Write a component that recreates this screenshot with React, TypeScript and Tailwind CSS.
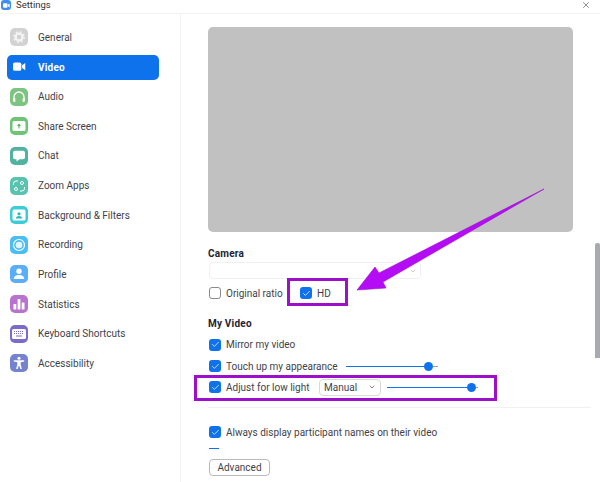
import React from 'react';
import { ChevronDown, Check, X } from 'lucide-react';

const VideoGlyph = ({ className }: { className: string }) => (
  <svg viewBox="0 0 14 10" className={className} fill="currentColor">
    <rect x="0" y="0.5" width="9" height="9" rx="2" />
    <path d="M9.8 3.6 13.2 1v8L9.8 6.4z" />
  </svg>
);

const icons: Record<string, React.ReactNode> = {
  General: (
    <svg viewBox="0 0 18 18" className="size-full" fill="none">
      <circle cx="9" cy="9" r="3.4" stroke="#fff" strokeWidth="2.4" fill="none" opacity="0.75" />
      <circle cx="9" cy="9" r="5.2" stroke="#fff" strokeWidth="1.4" strokeDasharray="2 2.08" opacity="0.75" />
    </svg>
  ),
  Audio: (
    <svg viewBox="0 0 18 18" className="size-full" fill="none">
      <path d="M4 12V9a5 5 0 0 1 10 0v3" stroke="#fff" strokeWidth="1.3" />
      <rect x="3.2" y="10" width="2.2" height="4" rx="1" fill="#fff" />
      <rect x="12.6" y="10" width="2.2" height="4" rx="1" fill="#fff" />
    </svg>
  ),
  'Share Screen': (
    <svg viewBox="0 0 18 18" className="size-full" fill="none">
      <rect x="2.5" y="4" width="13" height="10" rx="1.5" fill="#fff" />
      <path d="M9 11.5V7.5M7.5 8.8 9 7.2l1.5 1.6" stroke="#4fb85a" strokeWidth="1.1" />
    </svg>
  ),
  Chat: (
    <svg viewBox="0 0 18 18" className="size-full" fill="#fff">
      <path d="M5 3.8h8a2 2 0 0 1 2 2v4.4a2 2 0 0 1-2 2H9.5L6.5 14.6v-2.4H5a2 2 0 0 1-2-2V5.8a2 2 0 0 1 2-2z" />
    </svg>
  ),
  'Zoom Apps': (
    <svg viewBox="0 0 18 18" className="size-full" fill="none" stroke="#fff" strokeWidth="1">
      <path d="M8 4H6a2.5 2.5 0 0 0-2.5 2.5V8M14.5 10v1.5A2.5 2.5 0 0 1 12 14h-2" />
      <circle cx="12" cy="6" r="1.5" />
      <circle cx="6" cy="12" r="1.5" />
    </svg>
  ),
  'Background & Filters': (
    <svg viewBox="0 0 18 18" className="size-full" fill="none">
      <rect x="2.5" y="3.5" width="13" height="11" rx="1.5" fill="#fff" />
      <circle cx="9" cy="7.8" r="1.6" fill="#2bb8c6" />
      <path d="M5.8 12.5c.3-1.8 1.6-2.5 3.2-2.5s2.9.7 3.2 2.5z" fill="#2bb8c6" />
    </svg>
  ),
  Recording: (
    <svg viewBox="0 0 18 18" className="size-full" fill="none">
      <circle cx="9" cy="9" r="5.5" stroke="#fff" strokeWidth="1.2" />
      <circle cx="9" cy="9" r="3.3" fill="#fff" fillOpacity="0.85" />
    </svg>
  ),
  Profile: (
    <svg viewBox="0 0 18 18" className="size-full" fill="#fff">
      <circle cx="9" cy="6.3" r="2.7" />
      <path d="M3.8 14c0-2.8 2.3-4 5.2-4s5.2 1.2 5.2 4z" />
    </svg>
  ),
  Statistics: (
    <svg viewBox="0 0 18 18" className="size-full" fill="#fff">
      <rect x="3.5" y="9" width="2.8" height="5.5" rx="0.5" />
      <rect x="7.6" y="4" width="2.8" height="10.5" rx="0.5" />
      <rect x="11.7" y="7.5" width="2.8" height="7" rx="0.5" />
    </svg>
  ),
  'Keyboard Shortcuts': (
    <svg viewBox="0 0 18 18" className="size-full" fill="none">
      <rect x="2" y="4" width="14" height="10" rx="1.5" fill="#fff" />
      <path d="M4 6.5h10M4 8.5h10" stroke="#7d6bc9" strokeWidth="1" strokeDasharray="1 1" />
      <path d="M6 11h6" stroke="#7d6bc9" strokeWidth="1" />
    </svg>
  ),
  Accessibility: (
    <svg viewBox="0 0 18 18" className="size-full" fill="#fff">
      <circle cx="9" cy="4.3" r="1.5" />
      <path d="M3.8 6.2h10.4v1.4l-3.5.6v2.4l1.2 4.3h-1.5L9 11.3 7.6 14.9H6.1l1.2-4.3V8.2l-3.5-.6z" />
    </svg>
  ),
};

const navItems = [
  { label: 'General', color: 'bg-[#d2d2d2]' },
  { label: 'Video', color: '' },
  { label: 'Audio', color: 'bg-[#7cc47f]' },
  { label: 'Share Screen', color: 'bg-[#6cc474]' },
  { label: 'Chat', color: 'bg-[#4fb3a0]' },
  { label: 'Zoom Apps', color: 'bg-[#58c3ae]' },
  { label: 'Background & Filters', color: 'bg-[#3ccbd8]' },
  { label: 'Recording', color: 'bg-[#4bbdf5]' },
  { label: 'Profile', color: 'bg-[#5aadf8]' },
  { label: 'Statistics', color: 'bg-[#b873cf]' },
  { label: 'Keyboard Shortcuts', color: 'bg-[#7d6bc9]' },
  { label: 'Accessibility', color: 'bg-[#7582cf]' },
];

const CheckBox = ({ checked = true }: { checked?: boolean }) =>
  checked ? (
    <span className="flex size-3 shrink-0 items-center justify-center rounded-[3px] bg-[#0e72ed]">
      <Check size={9} color="#fff" strokeWidth={2} />
    </span>
  ) : (
    <span className="size-3 shrink-0 rounded-[3px] border border-[#8a8a8a] bg-white" />
  );

const Slider = ({ width, knob }: { width: string; knob: string }) => (
  <div className={`flex items-center ${width}`}>
    <div className={`h-px bg-[#0e72ed] ${knob}`} />
    <div className="size-[9px] shrink-0 rounded-full bg-[#0e72ed]" />
    <div className="h-px flex-1 bg-[#9a9a9a]" />
  </div>
);

export default function App() {
  return (
    <div className="relative flex h-[482px] w-[600px] flex-col overflow-hidden bg-white font-['Roboto',sans-serif] text-[10px] text-[#3f3f4a]">
      {/* Title bar */}
      <div className="flex h-[14px] shrink-0 items-start border-b border-[#f2f2f4] pr-[9px]">
        <span className="ml-px flex size-[10px] items-center justify-center rounded-[3px] bg-[#3d8ef0]">
          <VideoGlyph className="w-[7px] text-white" />
        </span>
        <span className="ml-[5px] text-[9.5px] leading-[10px] text-[#333]">Settings</span>
        <X size={10} className="ml-auto text-[#333]" strokeWidth={1.3} />
      </div>

      <div className="flex min-h-0 flex-1">
        {/* Sidebar */}
        <div className="flex w-[181px] shrink-0 flex-col border-r border-[#f1f2f6] pl-[7px] pt-[8.6px]">
          {navItems.map((item) =>
            item.label === 'Video' ? (
              <div key={item.label} className="flex h-[29.64px] items-center">
                <div className="flex h-[25px] w-[152px] items-center rounded-[5px] bg-[#0e72ed] pl-[6px] font-bold tracking-[0.02em] text-white">
                  <VideoGlyph className="w-[13px] text-white" />
                  <span className="ml-[12px]">Video</span>
                </div>
              </div>
            ) : (
              <div key={item.label} className="flex h-[29.64px] items-center pl-[3px]">
                <span className={`size-[18px] shrink-0 rounded-[5px] ${item.color}`}>{icons[item.label]}</span>
                <span className="ml-[10px] whitespace-nowrap">{item.label}</span>
              </div>
            ),
          )}
        </div>

        {/* Content */}
        <div className="flex min-w-0 flex-1 flex-col pl-[27px] pt-[13px]">
          <div className="h-[205px] w-[365px] shrink-0 rounded-[5px] bg-[#c1c1c1]" />

          <div className="mt-[15px] font-bold leading-[14px] tracking-[0.02em] text-[#232333]">Camera</div>
          <div className="ml-px mt-[1px] flex h-[17px] w-[212px] items-center justify-end rounded-[4px] border border-[#f0f0f2] pr-[3px]">
            <ChevronDown size={8} className="text-[#b5b5b5]" />
          </div>

          <div className="ml-px mt-[8px] flex h-[12px] items-center">
            <CheckBox checked={false} />
            <span className="ml-[5px] w-[74px]">Original ratio</span>
            <CheckBox />
            <span className="ml-[5px]">HD</span>
          </div>

          <div className="mt-[18px] font-bold leading-[14px] tracking-[0.02em] text-[#232333]">My Video</div>

          <div className="ml-px mt-[7px] flex h-[13px] items-center">
            <CheckBox />
            <span className="ml-[5px]">Mirror my video</span>
          </div>

          <div className="ml-px mt-[8.5px] flex h-[13px] items-center">
            <CheckBox />
            <span className="ml-[5px] w-[120px] whitespace-nowrap">Touch up my appearance</span>
            <Slider width="w-[92px]" knob="w-[78px]" />
          </div>

          <div className="ml-px mt-[6px] flex h-[17px] items-center">
            <CheckBox />
            <span className="ml-[5px] w-[93px] whitespace-nowrap">Adjust for low light</span>
            <span className="flex h-[17px] w-[62px] items-center justify-between rounded-[4px] border border-[#d8d8d8] pl-[4px] pr-[4px]">
              Manual
              <ChevronDown size={8} className="text-[#444]" strokeWidth={2} />
            </span>
            <div className="ml-[6px]">
              <Slider width="w-[91px]" knob="w-[80px]" />
            </div>
          </div>

          <div className="mt-[11px] h-px w-[383px] bg-[#f0f0f2]" />

          <div className="ml-px mt-[18px] flex h-[13px] items-center">
            <CheckBox />
            <span className="ml-[5px] whitespace-nowrap">Always display participant names on their video</span>
          </div>

          <div className="ml-px mt-[9px] h-px w-[10px] bg-[#0e72ed]" />

          <div className="ml-px mt-[10px] flex h-[17px] w-[61px] items-center justify-center rounded-[4px] border border-[#b9b9b9]">
            Advanced
          </div>
        </div>
      </div>

      {/* Scrollbar */}
      <div className="absolute left-[595px] top-[243px] h-[115px] w-[5px] rounded-t-[2px] bg-[#a9a9b0]" />

      {/* Annotations drawn over the screenshot */}
      <div className="absolute left-[287px] top-[278px] h-[28px] w-[61px] border-[3px] border-[#9c10cc]" />
      <div className="absolute left-[194px] top-[375px] h-[26px] w-[303px] border-[3px] border-[#9c10cc]" />
      <svg className="pointer-events-none absolute left-0 top-0" width="600" height="482" viewBox="0 0 600 482">
        <polygon points="544,189 379,273 375,267 357,290 386,288 383,282" fill="#b40cf5" stroke="#9c10cc" strokeWidth="0.6" />
      </svg>
    </div>
  );
}
